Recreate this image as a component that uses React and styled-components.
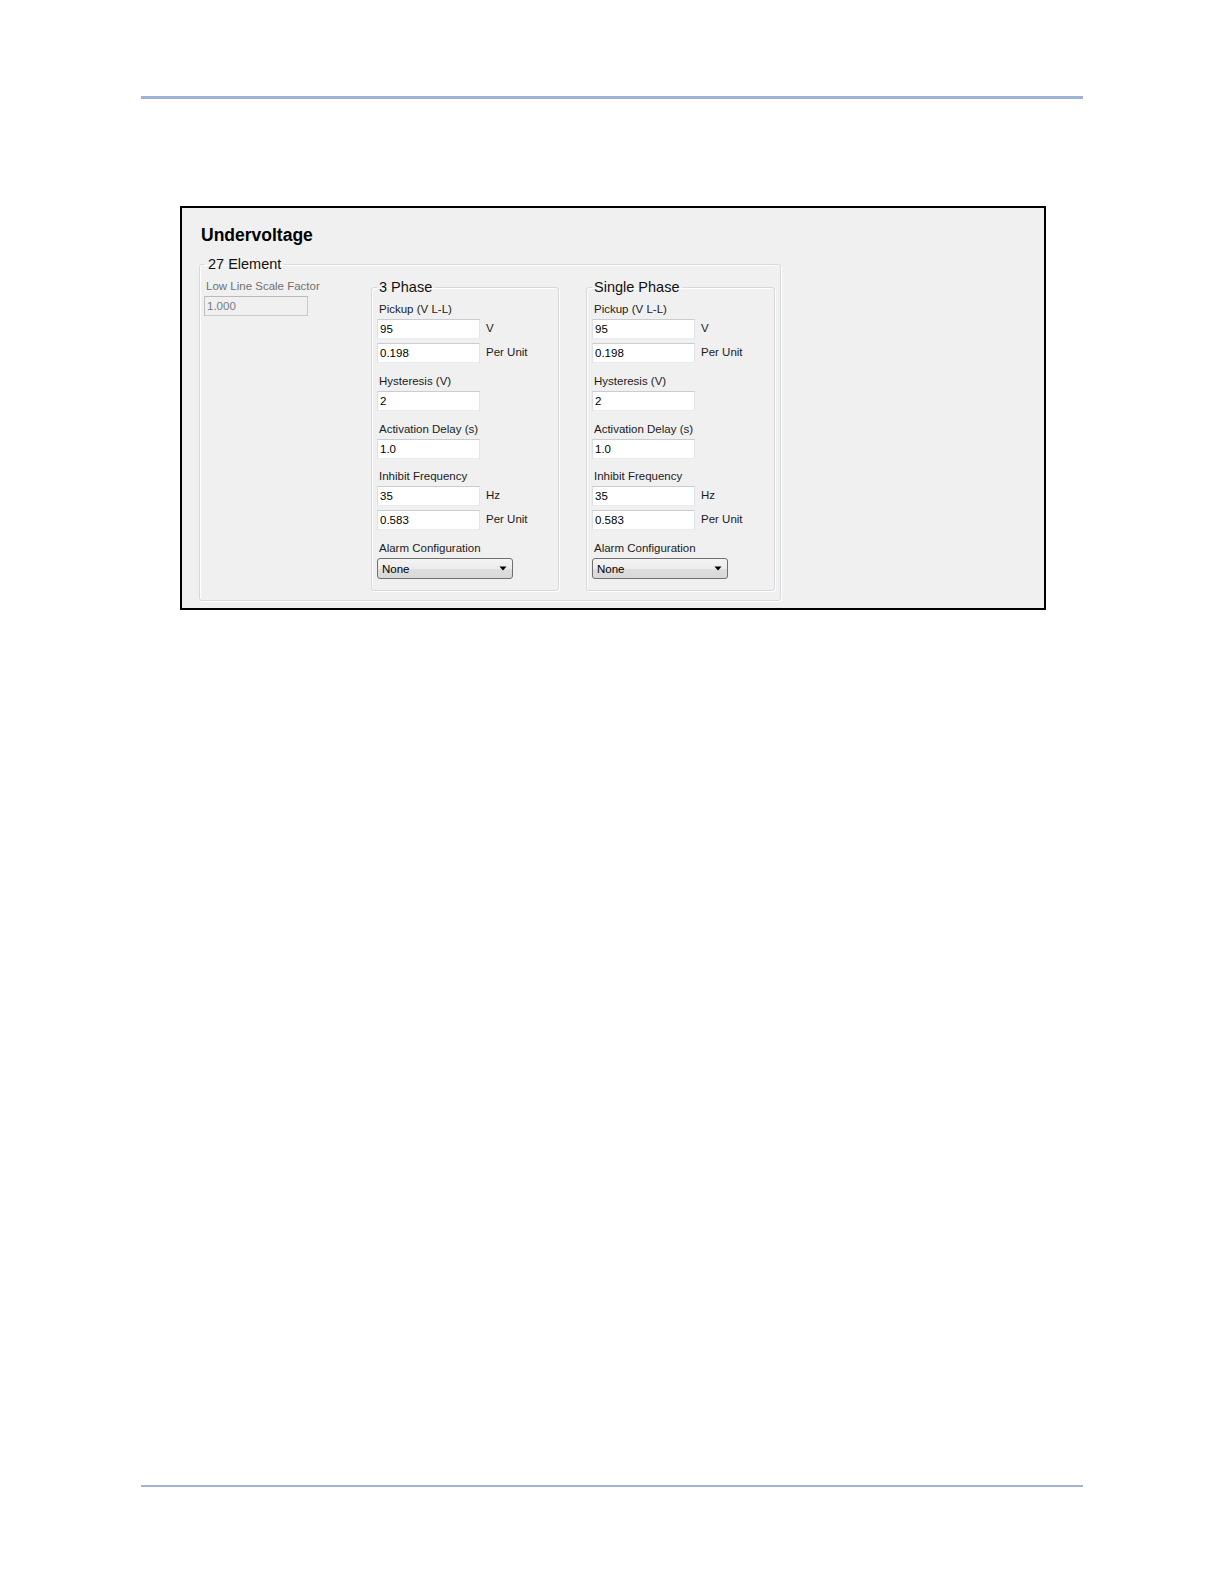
import React from "react";
import styled, { createGlobalStyle } from "styled-components";

const GlobalStyle = createGlobalStyle`
  html, body { margin: 0; padding: 0; background: #ffffff; }
  body { font-family: "Liberation Sans", Arial, sans-serif; }
  #root { width: 1224px; }
`;

const Page = styled.div`
  width: 1224px;
  min-height: 1584px;
  box-sizing: border-box;
  padding-top: 96px;
  background: #ffffff;
`;

const Rule = styled.div`
  margin-left: 141px;
  margin-top: ${(p) => p.$top || 0}px;
  width: 942px;
  height: ${(p) => p.$h}px;
  background: ${(p) => p.$c};
`;

const Shot = styled.div`
  margin: 107px 0 0 180px;
  width: 866px;
  box-sizing: border-box;
  border: 2px solid #000;
  background: #f0f0f0;
  padding: 17px 0 7px 17px;
`;

const Title = styled.h1`
  margin: 0;
  padding-left: 2px;
  font-size: 17.5px;
  line-height: 20px;
  font-weight: bold;
  color: #000;
`;

const Group = styled.fieldset`
  margin: ${(p) => (p.$outer ? "11px 0 0 0" : "0")};
  padding: ${(p) => (p.$outer ? "6px 5px 9px 4px" : "6px 5px 11px 5px")};
  min-width: 0;
  width: ${(p) => (p.$outer ? "fit-content" : "auto")};
  border: 1px solid #d6d9dc;
  border-radius: 3px;
  box-shadow: 1px 1px 0 #ffffff, inset 1px 1px 0 #ffffff;
  box-sizing: border-box;
`;

const Legend = styled.legend`
  padding: ${(p) => (p.$outer ? "0 3px 0 4px" : "0 3px 0 2px")};
  margin: 0;
  font-size: 14.5px;
  line-height: 17px;
  color: #111;
`;

const Columns = styled.div`
  display: grid;
  grid-template-columns: 140px 188px 189px;
  column-gap: 27px;
  align-items: start;
`;

const Column = styled.div`
  display: flex;
  flex-direction: column;
  align-items: flex-start;
`;

const Label = styled.div`
  padding-left: 2px;
  font-size: 11.5px;
  line-height: 14px;
  height: 14px;
  white-space: nowrap;
  color: ${(p) => (p.$disabled ? "#707070" : "#1b1b1b")};
  margin-bottom: 3px;
`;

const Field = styled.div`
  display: flex;
  flex-direction: column;
  margin-top: ${(p) => (p.$first ? 0 : 10.75)}px;
`;

const Row = styled.div`
  display: flex;
  align-items: center;
  gap: 6px;
  margin-top: ${(p) => (p.$next ? 4 : 0)}px;
`;

const TextBox = styled.div`
  width: ${(p) => p.$w || 103}px;
  height: 20px;
  box-sizing: border-box;
  display: flex;
  align-items: center;
  padding: 0 2px;
  font-size: 11.5px;
  color: ${(p) => (p.$disabled ? "#7a7a7a" : "#000")};
  background: ${(p) => (p.$disabled ? "#f0f0f0" : "#ffffff")};
  border: 1px solid;
  border-color: ${(p) =>
    p.$disabled
      ? "#b9b9b9 #c9c9c9 #c9c9c9 #c0c0c0"
      : "#c9ccd1 #e2e3ea #e8ebef #dcdfe4"};
`;

const Unit = styled.span`
  font-size: 11.5px;
  color: #1b1b1b;
  margin-top: -2px;
`;

const Combo = styled.div`
  width: 136px;
  height: 21px;
  box-sizing: border-box;
  display: flex;
  align-items: center;
  justify-content: space-between;
  padding: 0 5px 0 4px;
  font-size: 11.5px;
  color: #000;
  border: 1px solid #707070;
  border-radius: 3px;
  background: linear-gradient(#f4f4f4 0%, #ececec 50%, #dedede 51%, #d9d9d9 100%);
`;

const Arrow = () => (
  <svg width="8" height="5" viewBox="0 0 8 5">
    <path d="M0.5 0.5 L7.5 0.5 L4 4.5 Z" fill="#000" />
  </svg>
);

const Input = ({ value, unit, next }) => (
  <Row $next={next}>
    <TextBox>{value}</TextBox>
    {unit && <Unit>{unit}</Unit>}
  </Row>
);

const Phase = ({ title }) => (
  <Group>
    <Legend>{title}</Legend>
    <Field $first>
      <Label>Pickup (V L-L)</Label>
      <Input value="95" unit="V" />
      <Input value="0.198" unit="Per Unit" next />
    </Field>
    <Field>
      <Label>Hysteresis (V)</Label>
      <Input value="2" />
    </Field>
    <Field>
      <Label>Activation Delay (s)</Label>
      <Input value="1.0" />
    </Field>
    <Field>
      <Label>Inhibit Frequency</Label>
      <Input value="35" unit="Hz" />
      <Input value="0.583" unit="Per Unit" next />
    </Field>
    <Field>
      <Label>Alarm Configuration</Label>
      <Combo>
        <span>None</span>
        <Arrow />
      </Combo>
    </Field>
  </Group>
);

export default function App() {
  return (
    <Page>
      <GlobalStyle />
      <Rule $h={3} $c="#9fb3d7" />
      <Shot>
        <Title>Undervoltage</Title>
        <Group $outer>
          <Legend $outer>27 Element</Legend>
          <Columns>
            <Column>
              <Label $disabled>Low Line Scale Factor</Label>
              <TextBox $disabled $w={104}>1.000</TextBox>
            </Column>
            <Phase title="3 Phase" />
            <Phase title="Single Phase" />
          </Columns>
        </Group>
      </Shot>
      <Rule $top={875} $h={2} $c="#a3b4d2" />
    </Page>
  );
}
